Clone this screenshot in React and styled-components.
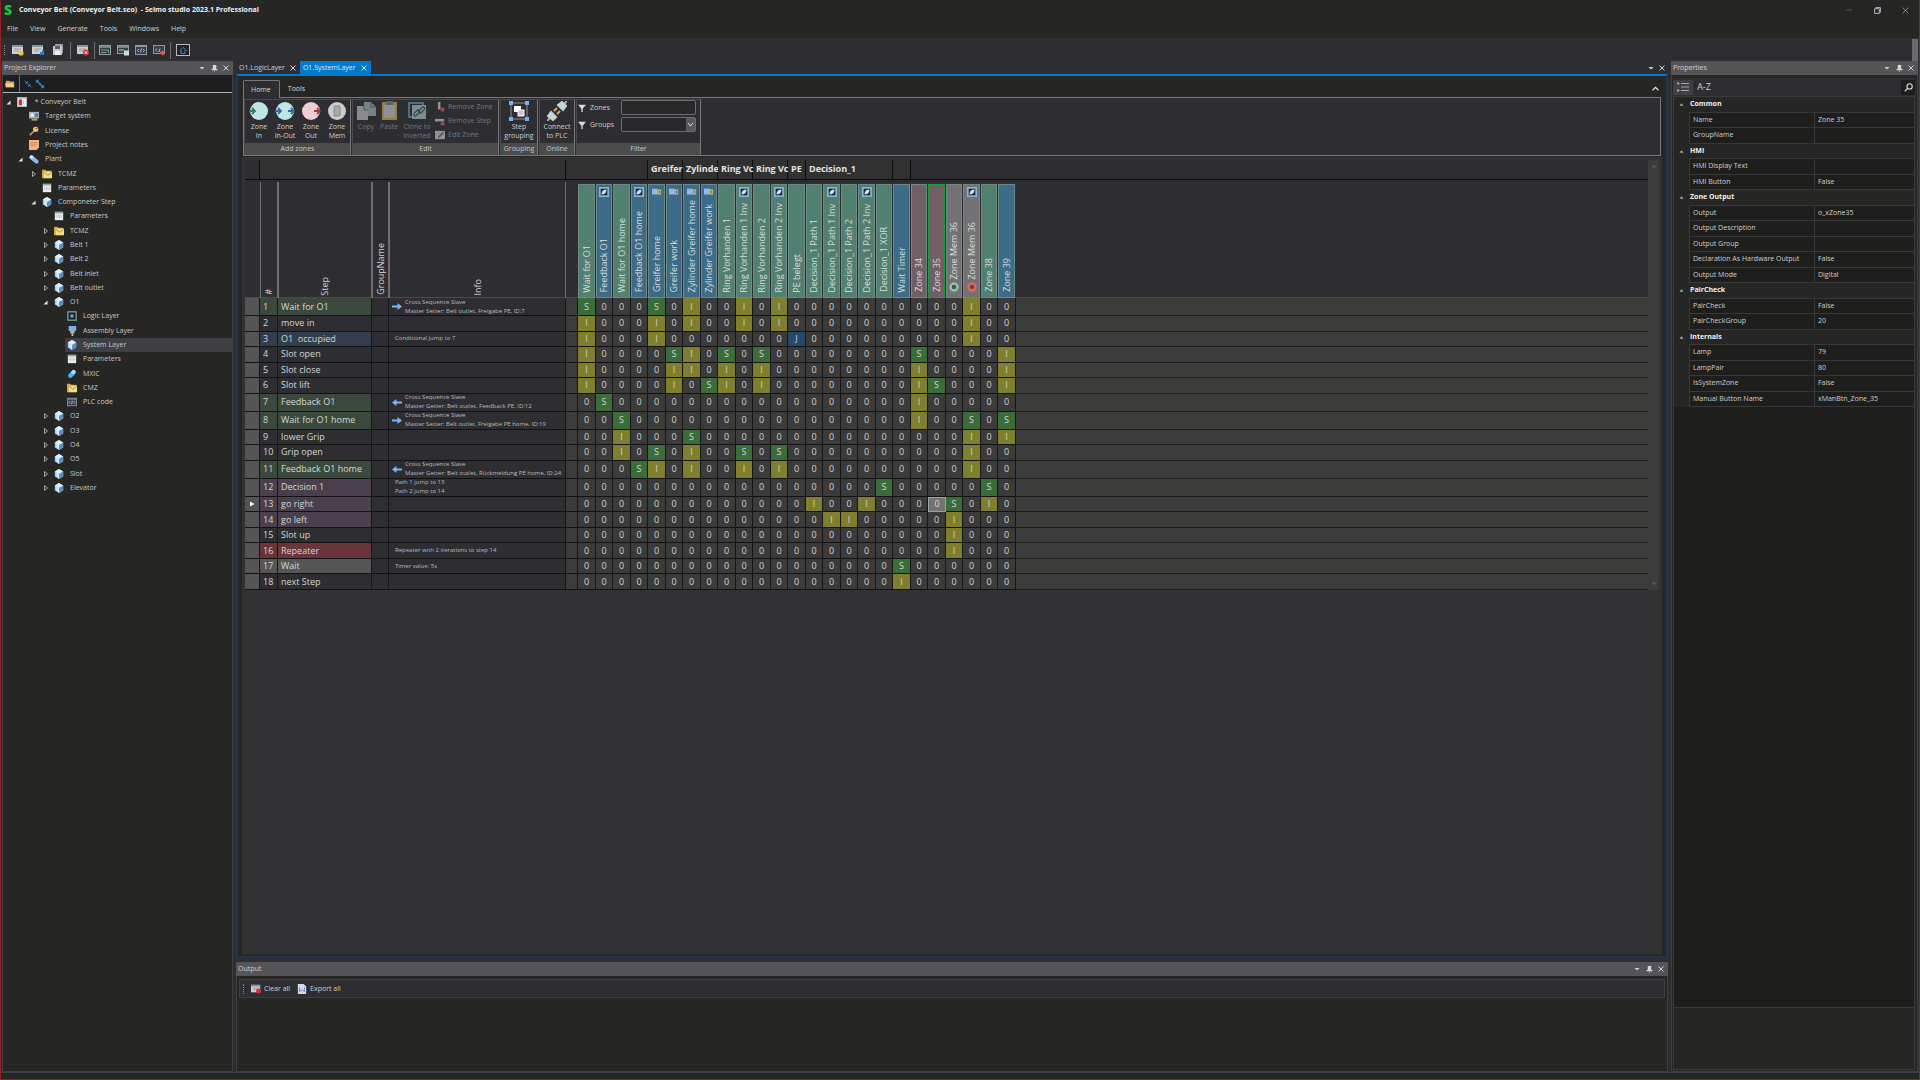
import React from 'react'
import styled, { createGlobalStyle } from 'styled-components'

const GlobalStyle = createGlobalStyle`
    * { box-sizing: border-box; }
    body {
        margin: 0;
        background: #262625;
        color: #d0d0d0;
        font: 7px/10px "Open Sans", "Noto Sans", sans-serif;
        overflow: hidden;
    }
    button, input, select {
        font: inherit;
        color: inherit;
        background: none;
        border: 0;
        padding: 0;
        margin: 0;
    }
    svg { display: block; flex: none; }
    ul { list-style: none; margin: 0; padding: 0; }
`

const Window = styled.div`
    height: 100vh;
    display: flex;
    flex-direction: column;
    background: #2d2d32;
    border: 1px solid #8e2226;
    border-top: 0;
`

const TitleBar = styled.header`
    display: flex;
    align-items: center;
    height: 20px;
    background: #262625;
    h1 {
        flex: 1;
        margin: 0;
        font-size: 7px;
        font-weight: 700;
        color: #f0f0f0;
        white-space: pre;
    }
`

const Logo = styled.span`
    width: 18px;
    padding-left: 3px;
    font: 900 14px/18px "Noto Sans", sans-serif;
    color: #1fc23c;
`

const WindowButton = styled.button`
    width: 28px;
    height: 18px;
    display: flex;
    align-items: center;
    justify-content: center;
    color: ${props => props.$dim ? '#555' : '#c8c8c8'};
`

const MenuBar = styled.nav`
    display: flex;
    height: 18px;
    background: #262625;
    button { padding: 0 6px 1px; }
`

const ToolBar = styled.div`
    display: flex;
    align-items: center;
    height: 23px;
    border-top: 1px solid #313130;
    padding-left: 3px;
`

const Grip = styled.i`
    width: 4px;
    height: 10px;
    border-left: 1px dotted #8a8a8a;
`

const ToolButton = styled.button`
    width: ${props => props.$narrow ? 18 : 20}px;
    height: 18px;
    display: flex;
    align-items: center;
    justify-content: center;
`

const ToolDivider = styled.i`
    width: 1px;
    height: 17px;
    margin: 0 ${props => props.$wide ? 2 : 1}px;
    background: #6f6f72;
`

const Overflow = styled.button`
    margin-left: auto;
    width: 6px;
    height: 22px;
    background: #6a6a6d;
    margin-right: 1px;
`

const Main = styled.main`
    flex: 1;
    min-height: 0;
    display: flex;
    gap: 3px;
    padding: 0 1px;
`

const Panel = styled.section`
    display: flex;
    flex-direction: column;
    flex: 0 0 ${props => props.$size}px;
    min-width: 0;
    min-height: 0;
    border: 1px solid #3d3d42;
    border-top: 0;
    background: #262625;
`

const PanelHeader = styled.header`
    display: flex;
    align-items: center;
    height: 14px;
    flex: none;
    margin: 0 -1px;
    padding: 0 1px 0 2px;
    background: #555558;
    h2 {
        flex: 1;
        margin: 0;
        font-size: 7px;
        font-weight: 400;
        color: #cfcfcf;
    }
    button {
        width: 12px;
        display: flex;
        justify-content: center;
    }
`

const TreeTools = styled.div`
    display: flex;
    align-items: center;
    height: 18px;
    flex: none;
    gap: 3px;
    padding-left: 2px;
    background: #1d1e20;
    border-bottom: 1px solid #b4b4b4;
`

/* 28 visible rows share the height evenly */
const Tree = styled.ul`
    display: grid;
    grid-auto-rows: 1fr;
    height: 400px;
    margin-top: 2px;
`

const TreeRow = styled.li`
    display: flex;
    align-items: center;
    padding-left: ${props => props.$indent}px;
    > button {
        width: 12px;
        display: flex;
        justify-content: center;
        padding-right: 1px;
    }
`

const TreeItem = styled.a`
    flex: 1;
    height: 100%;
    display: flex;
    align-items: center;
    gap: 6px;
    padding-left: 2px;
    color: #c9c9c9;
    text-decoration: none;
    white-space: pre;
    background: ${props => props.$selected ? '#3f3f46' : 'none'};
`

const Center = styled.div`
    flex: 1;
    min-width: 0;
    display: flex;
    flex-direction: column;
`

const DocTabs = styled.div`
    display: flex;
    height: 13px;
    flex: none;
    padding-right: 1px;
    > button:not([role]) {
        width: 11px;
        display: flex;
        align-items: center;
        justify-content: center;
    }
`

const DocTab = styled.button`
    display: flex;
    align-items: center;
    gap: 5px;
    height: 13px;
    padding: 0 4px 0 3px;
    color: ${props => props.$active ? '#d9ecff' : '#d0d0d0'};
    background: ${props => props.$active ? '#007acc' : 'none'};
`

const Spacer = styled.span`
    flex: 1;
`

const DocFrame = styled.div`
    flex: 1;
    min-height: 0;
    display: flex;
    flex-direction: column;
    margin-bottom: 4px;
    border: 2px solid #1c3850;
    border-top-color: #007acc;
    padding: 4px 4px 2px;
    background: #262625;
`

const RibbonTabs = styled.div`
    display: flex;
    height: 17px;
    flex: none;
    margin: 0 1px;
`

const RibbonTab = styled.button`
    padding: 0 8px 0 7px;
    border: 1px solid ${props => props.$active ? '#77777a' : 'transparent'};
    border-bottom: 0;
    border-radius: 2px 2px 0 0;
    background: ${props => props.$active ? '#2d2d32' : 'none'};
    margin-bottom: ${props => props.$active ? -1 : 0}px;
    z-index: 1;
    color: #d8d8d8;
`

const Collapse = styled.button`
    margin-left: auto;
    width: 12px;
    display: flex;
    align-items: center;
    justify-content: center;
`

const Ribbon = styled.div`
    display: flex;
    flex: none;
    gap: 1px;
    height: 59px;
    margin: 0 1px;
    padding-top: 1px;
    border: 1px solid #77777a;
    background: #2d2d32;
`

const RibbonGroup = styled.fieldset`
    display: flex;
    flex-direction: column;
    width: ${props => props.$width}px;
    min-width: 0;
    margin: 0;
    padding: 0;
    border: 1px solid #4a4a4c;
    border-right-color: #77777a;
`

const GroupBody = styled.div`
    flex: 1;
    display: flex;
    padding-left: 1px;
    ${props => props.$centered && 'justify-content: center; padding: 0;'}
`

const GroupLabel = styled.div`
    height: 11px;
    line-height: 11px;
    text-align: center;
    background: #4b4b4c;
    color: #c8c8c8;
`

const RibbonButton = styled.button`
    width: ${props => props.$width || 26}px;
    display: flex;
    flex-direction: column;
    align-items: center;
    gap: 1px;
    padding-top: 1px;
    line-height: 9px;
    white-space: pre-line;
    color: #d0d0d0;
    &:disabled { color: #77777a; }
    &:disabled svg { opacity: 0.65; }
`

const SmallButtons = styled.div`
    display: flex;
    flex-direction: column;
    gap: 4px;
    padding: 2px 0 0 1px;
    button {
        display: flex;
        align-items: center;
        gap: 3px;
        height: 10px;
        white-space: nowrap;
    }
    button:disabled { color: #77777a; }
    svg { opacity: 0.65; }
`

const Filters = styled.div`
    display: grid;
    grid-template-columns: 8px 27px 75px;
    grid-auto-rows: 15px;
    gap: 2px 4px;
    align-items: center;
    input, select {
        width: 75px;
        height: 15px;
        border: 1px solid #6c6c6e;
        border-radius: 2px;
        background: #28282b;
        appearance: none;
    }
`

const SelectBox = styled.div`
    position: relative;
    svg {
        position: absolute;
        right: 1px;
        top: 1px;
        pointer-events: none;
    }
`

const Sheet = styled.div`
    flex: 1;
    min-height: 0;
    display: flex;
    align-items: flex-start;
    margin-top: 1px;
    padding: 3px 3px 0;
    background: #323234;
`

const Table = styled.table`
    flex: 1;
    min-width: 0;
    display: block;
    font-size: 9px;
    line-height: 12px;
    tr {
        display: grid;
        grid-template-columns: 15px 18px 94px 17px 177px 12px repeat(12, 18px 17px) 18px 1fr;
    }
    thead, tbody { display: block; }
    th, td { padding: 0; }
`

const GroupHead = styled.th`
    grid-column: span ${props => props.$span || 1};
    height: 20px;
    line-height: 18px;
    padding: 0 2px 0 3px !important;
    text-align: left;
    white-space: nowrap;
    color: #e4e4e4;
    background: ${props => props.$plain ? '#2d2d32' : '#313131'};
    border-right: 1px solid #0c0c0c;
    border-bottom: 1px solid #0a0a0a;
    &:last-child { border-right: 0; }
`

const HeadRow = styled.tr`
    height: 118px;
    border-bottom: 1px solid #4c4c4e;
    background: #2d2d32;
`

const ColumnHead = styled.th`
    display: flex;
    align-items: flex-end;
    justify-content: center;
    margin-top: 2px;
    border: solid #6e6e70;
    border-width: 0 1px;
    padding-bottom: 4px !important;
    font-weight: 400;
    color: #d4d4d4;
`

const VerticalText = styled.span`
    writing-mode: vertical-rl;
    transform: rotate(180deg);
    white-space: nowrap;
`

const zoneColors = {
    in: '#528070',
    inOut: '#3c6c88',
    out: '#725f66',
    mem: '#727274',
}

const ZoneHead = styled.th`
    display: flex;
    flex-direction: column;
    align-items: center;
    gap: 3px;
    margin: 4px 1px 1px 0;
    padding: 2px 0 5px !important;
    font-weight: 400;
    color: #d8dedc;
    background: ${props => zoneColors[props.$kind]};
    border: 1px solid ${props => props.$selected ? '#1f9a3c' : '#6f8a86'};
    ${VerticalText} { margin-top: auto; }
`

const Body = styled.tbody`
    && {
        display: flex;
        flex-direction: column;
        height: 292px;
    }
`

const BodyRow = styled.tr`
    flex: ${props => props.$tall ? '0 0 18px' : '1 1 0'};
    min-height: 0;
    > * {
        border-right: 1px solid #161616;
        border-bottom: 1px solid #121212;
        overflow: hidden;
        white-space: pre;
        display: flex;
        align-items: center;
    }
`

const stepColors = {
    cross: '#3b493c',
    jump: '#323d4e',
    decision: '#4a404d',
    repeat: '#69343a',
    wait: '#575654',
}

const Marker = styled.td`
    justify-content: center;
    background: #555558;
`

const StepCell = styled.td`
    padding-left: 3px !important;
    color: #d2d8d4;
    background: ${props => stepColors[props.$kind] || '#2d2d32'};
`

const InfoCell = styled.td`
    gap: 3px;
    padding-left: ${props => props.$icon ? 3 : 6}px !important;
    font-size: 6px;
    line-height: 9px;
    color: #bcbcbc;
    background: #2d2d32;
`

const cellColors = { S: '#3a6d3a', I: '#7f7f2e', J: '#25486b' }

const Cell = styled.td`
    justify-content: center;
    color: #d4d4d4;
    background: ${props => cellColors[props.$value] || '#3b3b3b'};
    ${props => props.$selected && 'background: #77726f; border: 1px solid #8fa9b4 !important;'}
`

const Rest = styled.td`
    && { border-right: 0; border-color: #1e1e1e; }
    background: #3c3c3b;
`

const ScrollBar = styled.div`
    display: flex;
    flex-direction: column;
    justify-content: space-between;
    align-items: center;
    width: 11px;
    height: 430px;
    padding: 3px 0;
    background: #3b3b3c;
`

const OutputTools = styled.div`
    display: flex;
    align-items: center;
    gap: 7px;
    height: 19px;
    flex: none;
    margin: 3px 2px;
    padding-left: 3px;
    background: #2d2d32;
    border: 1px solid #3d3d42;
    ${Grip} { margin-right: -3px; }
    button {
        display: flex;
        align-items: center;
        gap: 3px;
    }
`

const PropTools = styled.div`
    display: flex;
    align-items: center;
    height: 18px;
    flex: none;
    margin: 3px 1px 0;
    background: #2d2d32;
    button {
        width: 20px;
        height: 15px;
        display: flex;
        align-items: center;
        justify-content: center;
        font-size: 9px;
        margin-right: 1px;
    }
    button[aria-pressed="true"] { background: #3f3f46; }
    button:last-child {
        width: 14px;
        margin-left: auto;
        background: #1e1e1c;
    }
`

const PropArea = styled.div`
    flex: 1;
    min-height: 0;
    margin: 0 2px 0 1px;
    background: #1e1e1c;
    border: 1px solid #3a3a3c;
`

const PropTable = styled.table`
    display: grid;
    grid-auto-rows: 1fr;
    height: 310px;
    tbody { display: contents; }
    tr {
        display: grid;
        grid-template-columns: 15px 5fr 4fr;
        background: #262625;
    }
    th, td {
        display: flex;
        align-items: center;
        min-width: 0;
        padding: 0 3px;
        text-align: left;
        font-weight: 400;
        background: #1e1e1c;
        border-left: 1px solid #38383a;
        border-bottom: 1px solid #38383a;
    }
    td:first-child {
        justify-content: center;
        background: none;
        border: 0;
    }
    th[colspan] {
        grid-column: span 2;
        padding: 0 1px;
        font-weight: 700;
        color: #f0f0f0;
        background: none;
        border-left: 0;
    }
`

const PropHelp = styled.div`
    height: 62px;
    flex: none;
    margin: 0 2px 1px 1px;
    border: 1px solid #3a3a3c;
    border-top: 0;
`

const StatusBar = styled.footer`
    height: 7px;
    background: #262625;
    border-top: 1px solid #3d3d42;
`

/* ---- icons ---- */

const Svg = ({ size = 12, children, ...rest }) => (
    <svg width={size} height={size} viewBox="0 0 12 12" fill="none" {...rest}>{children}</svg>
)

const Caret = () => <Svg size={6}><path d="M1 4h10L6 9z" fill="#d0d0d0" /></Svg>
const Pin = () => <Svg size={7}><path d="M3 0h6v7h2v2H1V7h2z" fill="#d8d8d8" /><path d="M6 9v3" stroke="#d8d8d8" /></Svg>
const Close = ({ size = 6 }) => <Svg size={size}><path d="M1 1l10 10M11 1L1 11" stroke="currentColor" strokeWidth="2" /></Svg>

const Sheetlet = ({ size, children }) => (
    <Svg size={size}>
        <rect x="0" y="1" width="11" height="9" fill="#cfd2d4" />
        <rect x="0" y="1" width="11" height="2" fill="#7d98a3" />
        <path d="M2 5h7M2 7h5" stroke="#8c8c8c" strokeWidth=".8" />
        {children}
    </Svg>
)

const icons = {
    newProject: <Sheetlet><circle cx="9" cy="9" r="2.6" fill="#e8c44e" /></Sheetlet>,
    open: <Sheetlet><path d="M8 8h2v-2l2 0v5H8z" fill="#2e7cc8" /></Sheetlet>,
    save: (
        <Svg>
            <path d="M3 0h8v9H3z" fill="#9a9aa8" />
            <path d="M1 2h8l1 1v8H1z" fill="#c9c9d4" />
            <path d="M3 2h5v3H3z" fill="#5b5b6a" />
            <path d="M3 7h5v4H3z" fill="#eee" />
        </Svg>
    ),
    closeProject: (
        <Sheetlet>
            <circle cx="9" cy="8.5" r="3" fill="#d4343c" />
            <path d="M7.800 7.300l2.400 2.400M10.200 7.300l-2.400 2.400" stroke="#fff" />
        </Sheetlet>
    ),
    panel: (
        <Svg>
            <rect x=".5" y="1.5" width="11" height="9" fill="#33413f" stroke="#8aa09c" />
            <path d="M1 3h10" stroke="#8aa09c" strokeWidth="1.5" />
            <path d="M2 6h7M2 8.500h5M9.500 6v3" stroke="#7f9894" />
        </Svg>
    ),
    panelAdd: (
        <Svg>
            <rect x=".5" y="1.5" width="11" height="8" fill="#33413f" stroke="#8aa09c" />
            <path d="M1 3h10M2 6h5" stroke="#8aa09c" strokeWidth="1.5" />
            <rect x="7" y="6.5" width="5" height="5" fill="#bfe3d6" />
        </Svg>
    ),
    code: (
        <Svg>
            <rect x=".5" y="1.5" width="11" height="9" fill="#38424a" stroke="#8a9aa4" />
            <path d="M1 2.500h10" stroke="#8a9aa4" />
            <path d="M4 5L2.500 6.500 4 8M8 5l1.500 1.500L8 8M6.500 4.500l-1 4" stroke="#d5dde2" strokeWidth=".8" />
        </Svg>
    ),
    codeStop: (
        <Svg>
            <rect x=".5" y="1.5" width="11" height="8" fill="#38424a" stroke="#8a9aa4" />
            <path d="M4 4.500L2.500 6 4 7.500M7 4.500L6 8" stroke="#d5dde2" strokeWidth=".8" />
            <path d="M7 8.500l2-2 3 1.500-2 4z" fill="#e0574f" />
        </Svg>
    ),
    home: (
        <svg width="14" height="12" viewBox="0 0 14 12" fill="none">
            <rect x=".5" y=".5" width="13" height="11" fill="#1c2228" stroke="#b8b8b8" />
            <path d="M3.500 6.500L7 3.500l3.500 3M5 6v3.500h4V6" stroke="#4a7fb0" />
        </svg>
    ),
    folder: <Svg><path d="M1 2h4l1 1h5v7H1z" fill="#c9a55a" /><path d="M0 5h10l1 5H1z" fill="#edd086" /></Svg>,
    mail: (
        <Svg>
            <path d="M0 1h4l1 1h6v9H0z" fill="#c9a24c" />
            <rect x="2" y="3" width="10" height="8" fill="#f4dc84" />
            <path d="M2.500 4L7 7.500 11.500 4" stroke="#a8823a" />
        </Svg>
    ),
    project: (
        <Svg>
            <rect x="0" y="0" width="12" height="12" fill="#9cb6c8" />
            <rect x="1" y="2" width="10" height="9" fill="#f2f2f2" />
            <rect x="2" y="3" width="4" height="7" fill="#d22b30" />
            <path d="M8 4v5" stroke="#aaa" />
        </Svg>
    ),
    target: (
        <Svg>
            <rect x="0" y="1" width="12" height="8" fill="#9fb3c0" />
            <rect x="2" y="3" width="4" height="4" fill="#e8eef2" />
            <rect x="7" y="3" width="4" height="4" fill="#5d8099" />
            <path d="M3 10.500h7" stroke="#c8a878" strokeWidth="2" />
        </Svg>
    ),
    key: <Svg><circle cx="8" cy="4" r="3.2" fill="#ecc968" /><circle cx="9" cy="3" r="1" fill="#6a5526" /><path d="M6 6l-5 5" stroke="#c79b45" strokeWidth="2" /></Svg>,
    notes: <Svg><path d="M0 0h12v9l-3 3H0z" fill="#efb384" /><path d="M2 3h8M2 5h8M2 7h5" stroke="#cf8458" /></Svg>,
    plant: <Svg><path d="M3 4l6 5" stroke="#8ab8ea" strokeWidth="5" strokeLinecap="round" /><circle cx="3" cy="3.5" r="2" fill="#d8ecfb" /></Svg>,
    params: <Svg><rect x="1" y="1" width="10" height="10" fill="#e9edf0" /><path d="M1 2h10" stroke="#93a6b3" strokeWidth="2" /><path d="M4 5L3 6.500 4 8M8 5l1 1.500L8 8M6 5v3" stroke="#8299a8" strokeWidth=".8" /></Svg>,
    cube: (
        <Svg>
            <path d="M6 0l5 3v6l-5 3-5-3V3z" fill="#a5cdf0" />
            <path d="M6 0l5 3-5 3-5-3z" fill="#dff1fa" />
            <path d="M6 6l5-3v6l-5 3z" fill="#5d8fc4" />
            <path d="M6 6L3 4.500V8l3 4z" fill="#d4f0ec" />
        </Svg>
    ),
    logic: (
        <Svg>
            <rect x="1" y="1" width="10" height="10" fill="#16222c" stroke="#7fa594" strokeWidth="1.5" />
            <circle cx="6" cy="6" r="2.2" fill="#58a8ee" />
        </Svg>
    ),
    assembly: <Svg><rect x="2" y="0" width="9" height="6" fill="#7faee8" /><rect x="4" y="6" width="5" height="3" fill="#d8b36a" /><path d="M6.500 9v3" stroke="#c8c8c8" strokeWidth="2" /></Svg>,
    mxic: <Svg><path d="M4 8l4-4" stroke="#4fb0f2" strokeWidth="5.5" strokeLinecap="round" /><path d="M7 4l1-1" stroke="#a6e0fb" strokeWidth="4" strokeLinecap="round" /></Svg>,
}

const ZoneIcon = ({ fill, left, right, memory }) => (
    <svg width="20" height="20" viewBox="0 0 20 20" fill="none">
        <circle cx="10" cy="10" r="9" fill={fill} />
        {left && <path d="M0 10h5M3 7l3 3-3 3" stroke={left} strokeWidth="1.8" />}
        {right && <path d="M13 10h5M16 7l3 3-3 3" stroke={right} strokeWidth="1.8" />}
        {memory && <rect x="7" y="5" width="6" height="10" rx="1" fill="#a8a8a8" stroke="#888" />}
    </svg>
)

const CopyIcon = () => (
    <svg width="20" height="20" viewBox="0 0 20 20">
        <path d="M8 1h7l5 5v9H8z" fill="#9fb0b0" />
        <path d="M15 1v5h5" stroke="#60706e" fill="none" />
        <path d="M1 5h7l4 4v10H1z" fill="#b9bfbf" />
        <path d="M8 5v4h4" stroke="#60706e" fill="none" />
    </svg>
)

const PasteIcon = () => (
    <svg width="20" height="20" viewBox="0 0 20 20">
        <rect x="3" y="1" width="15" height="18" fill="#cfa84e" />
        <rect x="5" y="4" width="11" height="13" fill="#c6c6c8" />
        <rect x="7" y="0" width="7" height="4" fill="#6e7f90" />
    </svg>
)

const CloneIcon = () => (
    <svg width="20" height="20" viewBox="0 0 20 20" fill="none">
        <rect x="2" y="2" width="14" height="14" stroke="#5c93b6" strokeWidth="2" />
        <rect x="5" y="4" width="14" height="14" fill="#a9c0cc" />
        <rect x="6" y="11" width="7" height="3" rx="1.5" transform="rotate(-45 9 12)" stroke="#3d5262" strokeWidth="1.2" />
        <rect x="11" y="8" width="7" height="3" rx="1.5" transform="rotate(-45 14 9)" stroke="#3d5262" strokeWidth="1.2" />
    </svg>
)

const GroupingIcon = () => (
    <svg width="20" height="20" viewBox="0 0 20 20" fill="none">
        <rect x="2" y="2" width="16" height="16" stroke="#8a9098" />
        <path d="M0 0h4v4H0zM16 0h4v4h-4zM0 16h4v4H0zM16 16h4v4h-4z" fill="#78b0f2" />
        <rect x="5" y="5" width="7" height="6" fill="#fff" />
        <rect x="9" y="9" width="6" height="6" fill="#dbb9d8" stroke="#fff" />
    </svg>
)

const PlugIcon = () => (
    <svg width="20" height="20" viewBox="0 0 20 20" fill="none">
        <path d="M0 20l4-4M16 4l4-4" stroke="#9bb4b4" strokeWidth="2" />
        <path d="M4 11l5 5-3 3-5-4zM11 4l5 5 3-4-4-4z" fill="#c3d6d4" stroke="#c3d6d4" strokeWidth="2" />
        <path d="M7 10l3-3M10 13l3-3" stroke="#e0ae3e" strokeWidth="2" />
    </svg>
)

const Funnel = () => <Svg size={8}><path d="M0 1h12L7 7v5H5V7z" fill="#dcdcdc" /></Svg>

const InvertIcon = () => (
    <Svg size={10}>
        <rect width="12" height="12" fill="#8ab4dc" />
        <rect x="2" y="2" width="8" height="8" fill="#1c2a38" />
        <path d="M3 9c0-4 2-6 6-6 0 4-2 6-6 6z" fill="#cfe2f2" />
    </Svg>
)

const CylinderIcon = () => (
    <Svg size={10}>
        <rect x="0" y="2" width="7" height="7" fill="#8fbaf0" />
        <rect x="7" y="3" width="4" height="6" fill="#d0b468" />
        <circle cx="9" cy="6" r="1" fill="#3b3b3b" />
    </Svg>
)

const RingIcon = ({ color }) => (
    <Svg size={10}><circle cx="6" cy="6" r="4.2" stroke={color} strokeWidth="2.8" fill="#4f5052" /></Svg>
)

const Arrow = ({ back }) => (
    <svg width="10" height="7" viewBox="0 0 10 7">
        <path d={back ? 'M4.500 0L0 3.500 4.500 7V4.500H10v-2H4.500z' : 'M5.500 0L10 3.500 5.500 7V4.500H0v-2h5.500z'} fill="#7db5f0" />
    </svg>
)

/* ---- data ---- */

const tree = [
    [0, 'project', ' * Conveyor Belt', 'open'],
    [1, 'target', 'Target system'],
    [1, 'key', 'License'],
    [1, 'notes', 'Project notes'],
    [1, 'plant', 'Plant', 'open'],
    [2, 'mail', 'TCMZ', 'closed'],
    [2, 'params', 'Parameters'],
    [2, 'cube', 'Componeter Step', 'open'],
    [3, 'params', 'Parameters'],
    [3, 'mail', 'TCMZ', 'closed'],
    [3, 'cube', 'Belt 1', 'closed'],
    [3, 'cube', 'Belt 2', 'closed'],
    [3, 'cube', 'Belt inlet', 'closed'],
    [3, 'cube', 'Belt outlet', 'closed'],
    [3, 'cube', 'O1', 'open'],
    [4, 'logic', 'Logic Layer'],
    [4, 'assembly', 'Assembly Layer'],
    [4, 'cube', 'System Layer'],
    [4, 'params', 'Parameters'],
    [4, 'mxic', 'MXIC'],
    [4, 'mail', 'CMZ'],
    [4, 'code', 'PLC code'],
    [3, 'cube', 'O2', 'closed'],
    [3, 'cube', 'O3', 'closed'],
    [3, 'cube', 'O4', 'closed'],
    [3, 'cube', 'O5', 'closed'],
    [3, 'cube', 'Slot', 'closed'],
    [3, 'cube', 'Elevator', 'closed'],
]

const indents = [0, 12, 25, 37, 50]

const zones = [
    ['in', 'Wait for O1'],
    ['inOut', 'Feedback O1', 'invert'],
    ['in', 'Wait for O1 home'],
    ['inOut', 'Feedback O1 home', 'invert'],
    ['inOut', 'Greifer home', 'cylinder'],
    ['inOut', 'Greifer work', 'cylinder'],
    ['inOut', 'Zylinder Greifer home', 'cylinder'],
    ['inOut', 'Zylinder Greifer work', 'cylinder'],
    ['in', 'Ring Vorhanden 1'],
    ['in', 'Ring Vorhanden 1 Inv', 'invert'],
    ['in', 'Ring Vorhanden 2'],
    ['in', 'Ring Vorhanden 2 Inv', 'invert'],
    ['in', 'PE belegt'],
    ['in', 'Decision_1 Path 1'],
    ['in', 'Decision_1 Path 1 Inv', 'invert'],
    ['in', 'Decision_1 Path 2'],
    ['in', 'Decision_1 Path 2 Inv', 'invert'],
    ['in', 'Decision_1 XOR'],
    ['inOut', 'Wait Timer'],
    ['out', 'Zone 34'],
    ['out', 'Zone 35'],
    ['mem', 'Zone Mem 36', null, '#8fc4b0'],
    ['mem', 'Zone Mem 36', 'invert', '#f0605c'],
    ['in', 'Zone 38'],
    ['inOut', 'Zone 39'],
]

const steps = [
    { name: 'Wait for O1', kind: 'cross', arrow: 'to', info: 'Cross Sequence Slave\nMaster Setter: Belt outlet, Freigabe PE, ID:7', cells: { 0: 'S', 4: 'S', 6: 'I', 9: 'I', 11: 'I', 22: 'I' } },
    { name: 'move in', cells: { 0: 'I', 4: 'I', 6: 'I', 9: 'I', 11: 'I', 22: 'I' } },
    { name: 'O1  occupied', kind: 'jump', info: 'Conditional jump to 7', cells: { 0: 'I', 4: 'I', 12: 'J', 22: 'I' } },
    { name: 'Slot open', cells: { 0: 'I', 5: 'S', 6: 'I', 8: 'S', 10: 'S', 19: 'S', 24: 'I' } },
    { name: 'Slot close', cells: { 0: 'I', 5: 'I', 6: 'I', 8: 'I', 10: 'I', 19: 'I', 24: 'I' } },
    { name: 'Slot lift', cells: { 0: 'I', 5: 'I', 7: 'S', 8: 'I', 10: 'I', 19: 'I', 20: 'S', 24: 'I' } },
    { name: 'Feedback O1', kind: 'cross', arrow: 'from', info: 'Cross Sequence Slave\nMaster Getter: Belt outlet, Feedback PE, ID:12', cells: { 1: 'S', 19: 'I' } },
    { name: 'Wait for O1 home', kind: 'cross', arrow: 'to', info: 'Cross Sequence Slave\nMaster Setter: Belt outlet, Freigabe PE home, ID:19', cells: { 2: 'S', 19: 'I', 22: 'S', 24: 'S' } },
    { name: 'lower Grip', cells: { 2: 'I', 6: 'S', 22: 'I', 24: 'I' } },
    { name: 'Grip open', cells: { 2: 'I', 4: 'S', 6: 'I', 9: 'S', 11: 'S', 22: 'I' } },
    { name: 'Feedback O1 home', kind: 'cross', arrow: 'from', info: 'Cross Sequence Slave\nMaster Getter: Belt outlet, Rückmeldung PE home, ID:24', cells: { 3: 'S', 4: 'I', 6: 'I', 9: 'I', 11: 'I', 22: 'I' } },
    { name: 'Decision 1', kind: 'decision', info: 'Path 1 jump to 13\nPath 2 jump to 14', cells: { 17: 'S', 23: 'S' } },
    { name: 'go right', kind: 'decision', current: true, cells: { 13: 'I', 16: 'I', 21: 'S', 23: 'I' } },
    { name: 'go left', kind: 'decision', cells: { 14: 'I', 15: 'I', 21: 'I' } },
    { name: 'Slot up', cells: { 21: 'I' } },
    { name: 'Repeater', kind: 'repeat', info: 'Repeater with 2 iterations to step 14', cells: { 21: 'I' } },
    { name: 'Wait', kind: 'wait', info: 'Timer value: 5s', cells: { 18: 'S' } },
    { name: 'next Step', cells: { 18: 'I' } },
]

const selectedZone = 20

const properties = [
    ['Common', [['Name', 'Zone 35'], ['GroupName', '']]],
    ['HMI', [['HMI Display Text', ''], ['HMI Button', 'False']]],
    ['Zone Output', [
        ['Output', 'o_xZone35'],
        ['Output Description', ''],
        ['Output Group', ''],
        ['Declaration As Hardware Output', 'False'],
        ['Output Mode', 'Digital'],
    ]],
    ['PairCheck', [['PairCheck', 'False'], ['PairCheckGroup', '20']]],
    ['Internals', [
        ['Lamp', '79'],
        ['LampPair', '80'],
        ['IsSystemZone', 'False'],
        ['Manual Button Name', 'xManBtn_Zone_35'],
    ]],
]

/* ---- parts ---- */

function Header({ title }) {
    return (
        <PanelHeader>
            <h2>{title}</h2>
            <button aria-label="Window position"><Caret /></button>
            <button aria-label="Auto hide"><Pin /></button>
            <button aria-label="Close"><Close /></button>
        </PanelHeader>
    )
}

function ProjectExplorer() {
    return (
        <Panel $size={231}>
            <Header title="Project Explorer" />
            <TreeTools>
                <button aria-label="Open folder">{React.cloneElement(icons.folder, { size: 10 })}</button>
                <ToolDivider />
                <button aria-label="Collapse all">
                    <Svg size={8}><path d="M1 1l4 4M11 11L7 7M5 2v3H2M7 10V7h3" stroke="#3f7fb8" strokeWidth="1.5" /></Svg>
                </button>
                <button aria-label="Expand all">
                    <Svg size={10}><path d="M2 2l8 8" stroke="#3f7fb8" strokeWidth="2" /><path d="M1 1h4L1 5zM11 11H7l4-4z" fill="#3f7fb8" /></Svg>
                </button>
            </TreeTools>
            <Tree>
                {tree.map(([level, icon, label, state], i) => (
                    <TreeRow key={i} $indent={indents[level]}>
                        <button aria-label={state || undefined} tabIndex={state ? 0 : -1}>
                            {state === 'open' && <Svg size={5}><path d="M11 1v10H1z" fill="#e0e0e0" /></Svg>}
                            {state === 'closed' && <Svg size={6}><path d="M3 1l6 5-6 5z" stroke="#d0d0d0" strokeWidth="1.5" /></Svg>}
                        </button>
                        <TreeItem href="#" $selected={label === 'System Layer'}>
                            {React.cloneElement(icons[icon], { size: 10 })}{label}
                        </TreeItem>
                    </TreeRow>
                ))}
            </Tree>
        </Panel>
    )
}

function RibbonBar() {
    return (
        <>
            <RibbonTabs>
                <RibbonTab $active>Home</RibbonTab>
                <RibbonTab>Tools</RibbonTab>
                <Collapse aria-label="Collapse ribbon">
                    <Svg size={7}><path d="M1 9l5-5 5 5" stroke="#e6e6e6" strokeWidth="2" /></Svg>
                </Collapse>
            </RibbonTabs>
            <Ribbon>
                <RibbonGroup $width={107}>
                    <GroupBody>
                        <RibbonButton><ZoneIcon fill="#bfe6e2" left="#3a7a62" />{'Zone\nIn'}</RibbonButton>
                        <RibbonButton><ZoneIcon fill="#bfe6e6" left="#35699c" right="#35699c" />{'Zone\nIn-Out'}</RibbonButton>
                        <RibbonButton><ZoneIcon fill="#eccfd3" right="#a83c40" />{'Zone\nOut'}</RibbonButton>
                        <RibbonButton><ZoneIcon fill="#cbcbcb" memory />{'Zone\nMem'}</RibbonButton>
                    </GroupBody>
                    <GroupLabel>Add zones</GroupLabel>
                </RibbonGroup>
                <RibbonGroup $width={147}>
                    <GroupBody>
                        <RibbonButton $width={24} disabled><CopyIcon />Copy</RibbonButton>
                        <RibbonButton $width={22} disabled><PasteIcon />Paste</RibbonButton>
                        <RibbonButton $width={34} disabled><CloneIcon />{'Clone to\nInverted'}</RibbonButton>
                        <SmallButtons>
                            <button disabled>
                                <Svg size={10}><path d="M5 0v9" stroke="#ccc" strokeWidth="3" /><path d="M7 7l4 4M11 7l-4 4" stroke="#e05a5a" strokeWidth="2" /></Svg>
                                Remove Zone
                            </button>
                            <button disabled>
                                <Svg size={10}><path d="M0 5h11" stroke="#ccc" strokeWidth="3" /><path d="M7 7l4 4M11 7l-4 4" stroke="#e05a5a" strokeWidth="2" /></Svg>
                                Remove Step
                            </button>
                            <button disabled>
                                <Svg size={10}><rect y="1" width="12" height="10" fill="#c4c8c8" /><path d="M4 9l6-6" stroke="#6a6a6a" strokeWidth="2" /></Svg>
                                Edit Zone
                            </button>
                        </SmallButtons>
                    </GroupBody>
                    <GroupLabel>Edit</GroupLabel>
                </RibbonGroup>
                <RibbonGroup $width={38}>
                    <GroupBody $centered>
                        <RibbonButton $width={36}><GroupingIcon />{'Step\ngrouping'}</RibbonButton>
                    </GroupBody>
                    <GroupLabel>Grouping</GroupLabel>
                </RibbonGroup>
                <RibbonGroup $width={36}>
                    <GroupBody $centered>
                        <RibbonButton $width={34}><PlugIcon />{'Connect\nto PLC'}</RibbonButton>
                    </GroupBody>
                    <GroupLabel>Online</GroupLabel>
                </RibbonGroup>
                <RibbonGroup $width={125}>
                    <GroupBody>
                        <Filters>
                            <Funnel />
                            <label htmlFor="zone-filter">Zones</label>
                            <input id="zone-filter" type="text" />
                            <Funnel />
                            <label htmlFor="group-filter">Groups</label>
                            <SelectBox>
                                <select id="group-filter" />
                                <svg width="9" height="13" viewBox="0 0 9 13">
                                    <rect width="9" height="13" fill="#5a5a5d" />
                                    <path d="M2 5l2.500 3L7 5" stroke="#e0e0e0" fill="none" />
                                </svg>
                            </SelectBox>
                        </Filters>
                    </GroupBody>
                    <GroupLabel>Filter</GroupLabel>
                </RibbonGroup>
            </Ribbon>
        </>
    )
}

function SystemLayer() {
    return (
        <Sheet>
            <Table>
                <thead>
                    <tr>
                        <GroupHead $plain />
                        <GroupHead $span={4} />
                        <GroupHead $span={5} />
                        <GroupHead $span={2}>Greifer</GroupHead>
                        <GroupHead $span={2}>Zylinde</GroupHead>
                        <GroupHead $span={2}>Ring Vc</GroupHead>
                        <GroupHead $span={2}>Ring Vc</GroupHead>
                        <GroupHead>PE</GroupHead>
                        <GroupHead $span={5}>Decision_1</GroupHead>
                        <GroupHead />
                        <GroupHead $span={7} $plain />
                    </tr>
                    <HeadRow>
                        <td />
                        {['#', 'Step', 'GroupName', 'Info'].map(name => (
                            <ColumnHead key={name}><VerticalText>{name}</VerticalText></ColumnHead>
                        ))}
                        <td />
                        {zones.map(([kind, name, icon, ring], i) => (
                            <ZoneHead key={i} $kind={kind} $selected={i === selectedZone}>
                                {icon === 'invert' && <InvertIcon />}
                                {icon === 'cylinder' && <CylinderIcon />}
                                <VerticalText>{name}</VerticalText>
                                {ring && <RingIcon color={ring} />}
                            </ZoneHead>
                        ))}
                        <td />
                    </HeadRow>
                </thead>
                <Body>
                    {steps.map((step, i) => (
                        <BodyRow key={i} $tall={Boolean(step.info && step.info.includes('\n'))}>
                            <Marker>
                                {step.current && <Svg size={6}><path d="M2 1l9 5-9 5z" fill="#fff" /></Svg>}
                            </Marker>
                            <StepCell $kind={step.kind}>{i + 1}</StepCell>
                            <StepCell $kind={step.kind}>{step.name}</StepCell>
                            <StepCell />
                            <InfoCell $icon={step.arrow}>
                                {step.arrow && <Arrow back={step.arrow === 'from'} />}
                                <span>{step.info}</span>
                            </InfoCell>
                            <Cell />
                            {zones.map((zone, z) => {
                                const value = step.cells[z] || '0'
                                return (
                                    <Cell key={z} $value={value} $selected={step.current && z === selectedZone}>
                                        {value}
                                    </Cell>
                                )
                            })}
                            <Rest />
                        </BodyRow>
                    ))}
                </Body>
            </Table>
            <ScrollBar>
                <Svg size={6}><path d="M1 9h10L6 3z" fill="#58585a" /></Svg>
                <Svg size={6}><path d="M1 3h10L6 9z" fill="#58585a" /></Svg>
            </ScrollBar>
        </Sheet>
    )
}

function Output() {
    return (
        <Panel $size={110}>
            <Header title="Output" />
            <OutputTools>
                <Grip />
                <button>
                    <Sheetlet size={10}><circle cx="9" cy="8.5" r="3" fill="#d4343c" /></Sheetlet>
                    Clear all
                </button>
                <button>
                    <Svg size={10}><path d="M1 0h7l3 3v9H1z" fill="#d4d8ee" /><path d="M3 4v5l3-2 3 2V4" stroke="#6a78c0" /></Svg>
                    Export all
                </button>
            </OutputTools>
        </Panel>
    )
}

function Properties() {
    return (
        <Panel $size={247}>
            <Header title="Properties" />
            <PropTools>
                <button aria-label="Categorized" aria-pressed="true">
                    <Svg><path d="M4 2.500h8M4 6h8M4 9.500h8" stroke="#a8a8a8" /><path d="M1 1v3M1 8v3M0 2.500h2.500M0 9.500h2.500" stroke="#a8a8a8" /></Svg>
                </button>
                <button>A-Z</button>
                <button aria-label="Search">
                    <Svg size={9}><circle cx="7.5" cy="4.5" r="3.5" stroke="#d8d8d8" strokeWidth="1.5" /><path d="M5 7l-4 4" stroke="#d8d8d8" strokeWidth="1.5" /></Svg>
                </button>
            </PropTools>
            <PropArea>
                <PropTable>
                    <tbody>
                        {properties.map(([category, items]) => (
                            <React.Fragment key={category}>
                                <tr>
                                    <td><Svg size={5}><path d="M1 9h10L6 3z" fill="#a8a8a8" /></Svg></td>
                                    <th colSpan={2}>{category}</th>
                                </tr>
                                {items.map(([name, value]) => (
                                    <tr key={name}>
                                        <td />
                                        <th scope="row">{name}</th>
                                        <td>{value}</td>
                                    </tr>
                                ))}
                            </React.Fragment>
                        ))}
                    </tbody>
                </PropTable>
            </PropArea>
            <PropHelp />
        </Panel>
    )
}

export default function App() {
    return (
        <Window>
            <GlobalStyle />
            <TitleBar>
                <Logo>S</Logo>
                <h1>{'Conveyor Belt (Conveyor Belt.seo)  - Selmo studio 2023.1 Professional'}</h1>
                <WindowButton aria-label="Minimize" $dim><Svg size={6}><path d="M0 6h12" stroke="currentColor" strokeWidth="2" /></Svg></WindowButton>
                <WindowButton aria-label="Restore">
                    <Svg size={7}><path d="M1 3h8v8H1zM3 3V1h8v8H9" stroke="currentColor" strokeWidth="1.5" /></Svg>
                </WindowButton>
                <WindowButton aria-label="Close"><Svg size={7}><path d="M1 1l10 10M11 1L1 11" stroke="currentColor" /></Svg></WindowButton>
            </TitleBar>
            <MenuBar>
                {['File', 'View', 'Generate', 'Tools', 'Windows', 'Help'].map(name => (
                    <button key={name}>{name}</button>
                ))}
            </MenuBar>
            <ToolBar>
                <Grip />
                <ToolButton aria-label="New project">{icons.newProject}</ToolButton>
                <ToolButton aria-label="Open project">{icons.open}</ToolButton>
                <ToolButton aria-label="Save project">{icons.save}</ToolButton>
                <ToolDivider $wide />
                <ToolButton aria-label="Close project">{icons.closeProject}</ToolButton>
                <ToolDivider />
                <ToolButton $narrow aria-label="Layers">{icons.panel}</ToolButton>
                <ToolButton $narrow aria-label="Add layer">{icons.panelAdd}</ToolButton>
                <ToolButton $narrow aria-label="Generate code">{icons.code}</ToolButton>
                <ToolButton $narrow aria-label="Stop generating">{icons.codeStop}</ToolButton>
                <ToolDivider $wide />
                <ToolButton aria-label="Start page">{icons.home}</ToolButton>
                <Overflow aria-label="More tools" />
            </ToolBar>
            <Main>
                <ProjectExplorer />
                <Center>
                    <DocTabs>
                        <DocTab role="tab">O1.LogicLayer <Close /></DocTab>
                        <DocTab role="tab" $active>O1.SystemLayer <Close /></DocTab>
                        <Spacer />
                        <button aria-label="Open documents"><Caret /></button>
                        <button aria-label="Close document"><Close /></button>
                    </DocTabs>
                    <DocFrame>
                        <RibbonBar />
                        <SystemLayer />
                    </DocFrame>
                    <Output />
                </Center>
                <Properties />
            </Main>
            <StatusBar />
        </Window>
    )
}
